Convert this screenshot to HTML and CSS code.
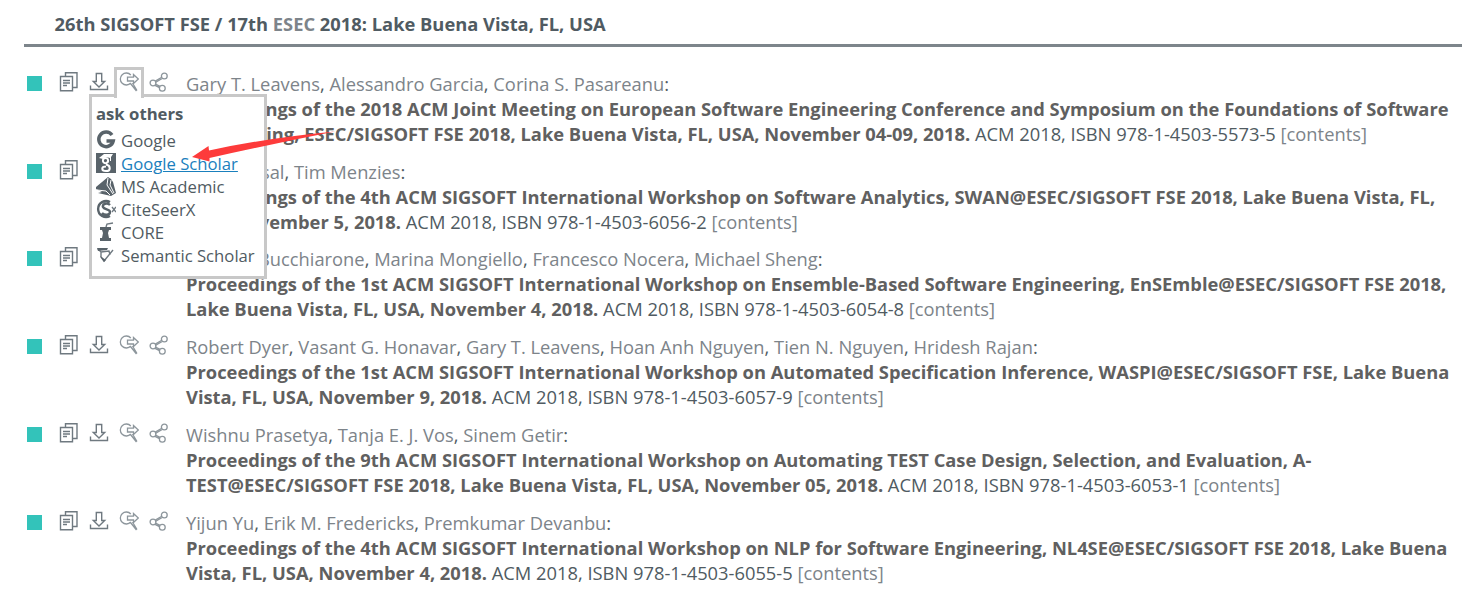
FILE: index.html
```html
<!DOCTYPE html>
<html lang="en">

<head>
    <meta charset="UTF-8">
    <meta name="viewport" content="width=device-width, initial-scale=1.0">
    <title>ESEC / SIGSOFT FSE</title>
    <link rel="stylesheet" href="styles.css">
</head>

<body>
    <!-- icons shared by all entries -->
    <svg class="sprite" width="0" height="0">
        <symbol id="copy" viewBox="0 0 20 20">
            <path d="M6.500 4V.800h11.500v14.700H14M1.500 4.500h12v14.200h-12zM4 8.500h7M4 11h7M4 13.500h4" />
        </symbol>
        <symbol id="download" viewBox="0 0 20 20">
            <path d="M7.300 1.500h5.400v8h3L10 15 4.300 9.500h3zM1.500 13.500v4h17v-4" />
        </symbol>
        <symbol id="ask" viewBox="0 0 20 20">
            <path d="M11.800 3A6 6 0 1 0 11.800 11M8.500 5.200h6V2.500L19.300 7l-4.800 4.500V9h-6zM11.500 11.500l6 7.500M13.500 11l4.500 7.500" />
        </symbol>
        <symbol id="share" viewBox="0 0 20 20">
            <circle cx="4" cy="11" r="2.900" />
            <circle cx="15.300" cy="4" r="2.900" />
            <circle cx="13.300" cy="16.200" r="2.900" />
            <path d="M6.300 9l6.500-3.800M6.300 10.500l6.500-3.800M6.500 12l4.500 2.300M6 13.300l4.500 2.300" />
        </symbol>
    </svg>

    <header class="headline">
        <h2>26th SIGSOFT FSE / 17th <a>ESEC</a> 2018: Lake Buena Vista, FL, USA</h2>
    </header>

    <ul class="publ-list">
        <li class="entry">
            <span class="box"></span>
            <nav class="publ">
                <svg><use href="#copy" /></svg>
                <svg><use href="#download" /></svg>
                <div class="drop-down">
                    <div class="tab"><svg class="light"><use href="#ask" /></svg></div>
                    <div class="menu">
                        <h3>ask others</h3>
                        <ul>
                            <li>
                                <svg viewBox="0 0 20 20"><path class="thick" d="M16 5A7.300 7.300 0 1 0 17.200 11H10.500" /></svg>
                                <a>Google</a>
                            </li>
                            <li>
                                <svg viewBox="0 0 20 20"><path class="fill" d="M0 0h20v20H0z" /><path class="fill white" d="M3 5l5-4h9l-2 3v4h-1V5l-4-1-3 2z" /><path class="white-line" d="M9.500 5a2.600 2.600 0 1 0 1 5c2.500-1 2-5-1-5M10 11.500c5 1 5 6.500 0 6.500s-5-4.500 0-4.500" /></svg>
                                <a class="active">Google Scholar</a>
                            </li>
                            <li>
                                <svg viewBox="0 0 20 20"><path class="fill" d="M0 11L12 1l3 2 2 3 3 11-5 3-13-3 4-1-6-3z" /><path class="white-line thin" d="M1 14l9 1 4 4M12 2l-1 7 6 9M15 4l-1 5 4 8" /></svg>
                                <a>MS Academic</a>
                            </li>
                            <li>
                                <svg viewBox="0 0 20 20"><path class="medium" d="M14 3A8 8 0 1 0 14 17M14 6C11 3 6 5 7 8s7 2 7 5-5 4-8 1" /><path class="small" d="M16 8l4 5M20 8l-4 5" /></svg>
                                <a>CiteSeerX</a>
                            </li>
                            <li>
                                <svg viewBox="0 0 20 20"><path class="fill" d="M4 5h11v3h-2l-1 3 1 5h2v3H4v-3h2l1-5-1-3H4z" /><path class="small" d="M10 5l1-3 6-1" /></svg>
                                <a>CORE</a>
                            </li>
                            <li>
                                <svg viewBox="0 0 20 20"><path class="small" d="M2 4l3 3v5l3 4L17 5M5 7l8-1 1 4" /><path class="fill" d="M1 3h11l-1 2-9 1zM4 11l4 6 2-2z" /></svg>
                                <a>Semantic Scholar</a>
                            </li>
                        </ul>
                    </div>
                </div>
                <svg class="light"><use href="#share" /></svg>
            </nav>
            <cite>
                <a>Gary T. Leavens</a>, <a>Alessandro Garcia</a>, <a>Corina S. Pasareanu</a>:<br>
                <b>Proceedings of the 2018 ACM Joint Meeting on European Software Engineering Conference and Symposium on the Foundations of Software Engineering, ESEC/SIGSOFT FSE 2018, Lake Buena Vista, FL, USA, November 04-09, 2018.</b> ACM 2018, ISBN 978-1-4503-5573-5 <a>[contents]</a>
            </cite>
        </li>
        <li class="entry">
            <span class="box"></span>
            <nav class="publ">
                <svg><use href="#copy" /></svg>
                <svg><use href="#download" /></svg>
                <svg class="light"><use href="#ask" /></svg>
                <svg class="light"><use href="#share" /></svg>
            </nav>
            <cite>
                <a>Olga Baysal</a>, <a>Tim Menzies</a>:<br>
                <b>Proceedings of the 4th ACM SIGSOFT International Workshop on Software Analytics, SWAN@ESEC/SIGSOFT FSE 2018, Lake Buena Vista, FL, USA, November 5, 2018.</b> ACM 2018, ISBN 978-1-4503-6056-2 <a>[contents]</a>
            </cite>
        </li>
        <li class="entry">
            <span class="box"></span>
            <nav class="publ">
                <svg><use href="#copy" /></svg>
                <svg><use href="#download" /></svg>
                <svg class="light"><use href="#ask" /></svg>
                <svg class="light"><use href="#share" /></svg>
            </nav>
            <cite>
                <a>Antonio Bucchiarone</a>, <a>Marina Mongiello</a>, <a>Francesco Nocera</a>, <a>Michael Sheng</a>:<br>
                <b>Proceedings of the 1st ACM SIGSOFT International Workshop on Ensemble-Based Software Engineering, EnSEmble@ESEC/SIGSOFT FSE 2018, Lake Buena Vista, FL, USA, November 4, 2018.</b> ACM 2018, ISBN 978-1-4503-6054-8 <a>[contents]</a>
            </cite>
        </li>
        <li class="entry">
            <span class="box"></span>
            <nav class="publ">
                <svg><use href="#copy" /></svg>
                <svg><use href="#download" /></svg>
                <svg class="light"><use href="#ask" /></svg>
                <svg class="light"><use href="#share" /></svg>
            </nav>
            <cite>
                <a>Robert Dyer</a>, <a>Vasant G. Honavar</a>, <a>Gary T. Leavens</a>, <a>Hoan Anh Nguyen</a>, <a>Tien N. Nguyen</a>, <a>Hridesh Rajan</a>:<br>
                <b>Proceedings of the 1st ACM SIGSOFT International Workshop on Automated Specification Inference, WASPI@ESEC/SIGSOFT FSE, Lake Buena Vista, FL, USA, November 9, 2018.</b> ACM 2018, ISBN 978-1-4503-6057-9 <a>[contents]</a>
            </cite>
        </li>
        <li class="entry">
            <span class="box"></span>
            <nav class="publ">
                <svg><use href="#copy" /></svg>
                <svg><use href="#download" /></svg>
                <svg class="light"><use href="#ask" /></svg>
                <svg class="light"><use href="#share" /></svg>
            </nav>
            <cite>
                <a>Wishnu Prasetya</a>, <a>Tanja E. J. Vos</a>, <a>Sinem Getir</a>:<br>
                <b>Proceedings of the 9th ACM SIGSOFT International Workshop on Automating TEST Case Design, Selection, and Evaluation, A-TEST@ESEC/SIGSOFT FSE 2018, Lake Buena Vista, FL, USA, November 05, 2018.</b> ACM 2018, ISBN 978-1-4503-6053-1 <a>[contents]</a>
            </cite>
        </li>
        <li class="entry">
            <span class="box"></span>
            <nav class="publ">
                <svg><use href="#copy" /></svg>
                <svg><use href="#download" /></svg>
                <svg class="light"><use href="#ask" /></svg>
                <svg class="light"><use href="#share" /></svg>
            </nav>
            <cite>
                <a>Yijun Yu</a>, <a>Erik M. Fredericks</a>, <a>Premkumar Devanbu</a>:<br>
                <b>Proceedings of the 4th ACM SIGSOFT International Workshop on NLP for Software Engineering, NL4SE@ESEC/SIGSOFT FSE 2018, Lake Buena Vista, FL, USA, November 4, 2018.</b> ACM 2018, ISBN 978-1-4503-6055-5 <a>[contents]</a>
            </cite>
        </li>
    </ul>

    <!-- red arrow pointing at Google Scholar -->
    <svg class="arrow" viewBox="0 0 144 32">
        <path d="M0 27L16.500 16l.5 4.500Q75 8 143 1.500 80 14 17.500 28v3.500z" />
    </svg>
</body>

</html>
```

FILE: styles.css
```css
* {
    margin: 0;
    padding: 0;
    box-sizing: border-box;
}

body {
    font-family: "Open Sans", sans-serif;
    font-size: 18.32px;
    line-height: 25px;
    color: #505b62;
    background: #fff;
    height: 600px;
    overflow: hidden;
    position: relative;
}

ul {
    list-style: none;
}

a {
    color: #7d848a;
}

.sprite {
    position: absolute;
}

.headline {
    margin: 0 17px 0 24px;
    padding: 11px 0 8px 30.5px;
    border-bottom: 3px solid #7d858b;
}

.headline h2 {
    font-size: 18.32px;
    font-weight: 700;
}

.publ-list {
    padding: 24.9px 17px 0 27px;
}

.entry {
    display: flex;
    height: 87.75px;
}

.box {
    width: 15px;
    height: 15px;
    margin: 4px 17px 0 0;
    background: #33c3ba;
}

.publ {
    display: flex;
    gap: 10px;
    width: 127px;
    flex: none;
}

.publ svg {
    width: 20px;
    height: 20px;
    fill: none;
    stroke: #6f7980;
    stroke-width: 1.4;
}

.publ svg.light {
    stroke: #8d969c;
    stroke-width: 1.3;
}

cite {
    flex: 1;
    margin-top: -1px;
    font-style: normal;
}

b {
    color: #606060;
}

.drop-down {
    position: relative;
    width: 20px;
    height: 20px;
}

/* tab covers the top border of the menu */
.tab {
    position: absolute;
    z-index: 3;
    top: -5px;
    left: -5px;
    width: 30px;
    height: 31px;
    padding: 2px;
    border: 3px solid #c8c8c8;
    border-bottom: none;
    background: #fff;
}

.menu {
    position: absolute;
    z-index: 2;
    top: 22px;
    left: -30px;
    width: 178px;
    height: 185px;
    padding: 5px 4px;
    border: 3px solid #c8c8c8;
    background: #fff;
    font-size: 16.7px;
    line-height: 23px;
    white-space: nowrap;
}

.menu h3 {
    font-size: 16.7px;
    margin-bottom: 4px;
}

.menu li {
    display: flex;
    align-items: center;
    gap: 5px;
    height: 23px;
}

.menu a {
    color: #505b62;
}

.menu a.active {
    color: #1a80bd;
    text-decoration: underline;
}

.menu .fill {
    fill: #59636a;
    stroke: none;
}

.menu .white {
    fill: #fff;
}

.menu .white-line {
    stroke: #fff;
    stroke-width: 2;
}

.menu .thin {
    stroke-width: 1;
}

.menu .thick {
    stroke: #59636a;
    stroke-width: 3.5;
}

.menu .medium {
    stroke: #59636a;
    stroke-width: 2.4;
}

.menu .small {
    stroke-width: 1.4;
}

.arrow {
    position: absolute;
    z-index: 5;
    top: 130px;
    left: 192px;
    width: 144px;
    height: 32px;
    fill: #fd3b3b;
}
```
